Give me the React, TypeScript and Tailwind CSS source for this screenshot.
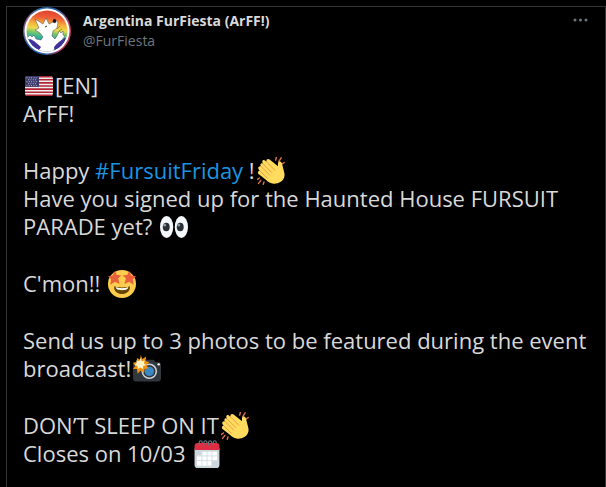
import React from 'react';

const emojiClass = 'mx-0.5 -my-1 inline-block h-7 w-7 align-[-2px]';

function Avatar() {
  return (
    <svg viewBox="0 0 48 48" className="h-12 w-12 shrink-0" role="img" aria-label="Avatar">
      <defs>
        <linearGradient id="rainbow" x1="0.1" y1="0" x2="0" y2="1">
          <stop offset="0" stopColor="#dc3a30" />
          <stop offset="0.18" stopColor="#ee5f35" />
          <stop offset="0.32" stopColor="#f7b63c" />
          <stop offset="0.42" stopColor="#ecd94c" />
          <stop offset="0.5" stopColor="#7cc868" />
          <stop offset="0.6" stopColor="#2fb3a0" />
          <stop offset="0.72" stopColor="#2b8fc0" />
          <stop offset="1" stopColor="#3a2f9c" />
        </linearGradient>
        <linearGradient id="ring" x1="0" y1="0" x2="1" y2="0.3">
          <stop offset="0" stopColor="#c8405a" />
          <stop offset="0.3" stopColor="#2f6fb4" />
          <stop offset="0.7" stopColor="#2a5fa8" />
          <stop offset="1" stopColor="#c03a5c" />
        </linearGradient>
        <clipPath id="disc">
          <circle cx="24" cy="24" r="20.500" />
        </clipPath>
      </defs>
      <circle cx="24" cy="24" r="24" fill="url(#ring)" />
      <circle cx="24" cy="24" r="22.500" fill="#fff" />
      <g clipPath="url(#disc)">
        <rect width="48" height="48" fill="url(#rainbow)" />
        {/* fox with both arms up */}
        <path
          d="M4 31l3-3 2 2 2-2 2 4 5 1 2-3-3-4-5-3 4-2-4-9 8 5 3-6 3 6 4-2 3-2 2 3-1 5-4 3-1 5 3 3 3-5 1-3 2 2 2-2 0 4 2 1-4 5-5 4-2 5 3 7H14l3-6-5-5z"
          fill="#fff"
          stroke="#4b4b3a"
          strokeWidth="0.500"
        />
        <path d="M5 33c2 5 6 8 11 10l2-3-7-6-4-2z" fill="#42309c" />
        <path d="M43 31c-2 6-6 10-11 12l-1-3 5-5 6-4z" fill="#42309c" />
        <path d="M34 22l3-3M36 24l3-2" stroke="#8a7a2c" strokeWidth="0.800" />
        <ellipse cx="31.500" cy="14" rx="1.800" ry="2" fill="#151515" />
        <path d="M22 20l2-1" stroke="#333" strokeWidth="1" />
      </g>
    </svg>
  );
}

function Flag() {
  return (
    <svg viewBox="0 0 36 36" className={emojiClass} role="img" aria-label="United States">
      <defs>
        <clipPath id="flag">
          <rect y="5" width="36" height="26" rx="4" />
        </clipPath>
      </defs>
      <g clipPath="url(#flag)">
        <rect y="5" width="36" height="26" fill="#eee" />
        <path
          d="M0 6h36M0 10h36M0 14h36M0 18h36M0 22h36M0 26h36M0 30h36"
          stroke="#b22334"
          strokeWidth="2"
        />
        <rect y="5" width="18" height="14" fill="#3c3b6e" />
        <path
          d="M2 7.500h15M4 10h12M2 12.500h15M4 15h12M2 17.500h15"
          stroke="#fff"
          strokeWidth="1"
          strokeDasharray="1 2"
        />
      </g>
    </svg>
  );
}

function Clap() {
  return (
    <svg viewBox="0 0 36 36" className={emojiClass} role="img" aria-label="Clapping hands">
      <path
        d="M24 4l1-4M28 6l3-5M31 10l4-3M3 27l-3 2M5 30l-3 4M9 32l-1 3"
        stroke="#e2704c"
        strokeWidth="1.800"
        strokeLinecap="round"
      />
      <path
        d="M5 12c-2-3 1-5 3-3l-1-2c-1-3 2-4 4-2l1 1c0-4 3-4 5-2l10 8 0-4c0-3 4-3 5 0l3 12c2 7-3 13-11 14-5 1-9-1-13-5L2 22c-2-2 0-5 2-4l-1-1c-3-3-1-5 2-5z"
        fill="#ffdc5d"
      />
      <path
        d="M5 12l11 11M8 9l11 11M12 6l11 11M4 18l9 9"
        fill="none"
        stroke="#ef9645"
        strokeWidth="1.200"
        strokeLinecap="round"
      />
    </svg>
  );
}

function Eyes() {
  return (
    <svg viewBox="0 0 36 36" className={emojiClass} role="img" aria-label="Eyes">
      <ellipse cx="8.500" cy="18" rx="8.500" ry="14" fill="#f5f8fa" />
      <ellipse cx="27.500" cy="18" rx="8.500" ry="14" fill="#f5f8fa" />
      <ellipse cx="8" cy="18" rx="4.500" ry="5.500" fill="#292f33" />
      <ellipse cx="26" cy="18" rx="4.500" ry="5.500" fill="#292f33" />
      <circle cx="6" cy="15.500" r="2" fill="#8899a6" />
      <circle cx="24" cy="15.500" r="2" fill="#8899a6" />
    </svg>
  );
}

function StarStruck() {
  return (
    <svg viewBox="0 0 36 36" className={emojiClass} role="img" aria-label="Star-struck">
      <circle cx="18" cy="18" r="18" fill="#ffcc4d" />
      <path d="M8 21c4 2 16 2 20 0 1 6-4 10-10 10S7 27 8 21z" fill="#664500" />
      <path d="M10 22c4 2 12 2 16 0 0 3-3 4-8 4s-8-1-8-4z" fill="#fff" />
      <path
        d="M9 1l2 5 6 1-4 4 2 7-6-3-6 4 1-7-4-4 6-1zM27 1l3 6 6 1-4 4 1 7-6-4-6 3 2-7-4-4 6-1z"
        fill="#e8603c"
      />
    </svg>
  );
}

function CameraFlash() {
  return (
    <svg viewBox="0 0 36 36" className={emojiClass} role="img" aria-label="Camera with flash">
      <rect x="0" y="9" width="36" height="25" rx="4" fill="#31373d" />
      <rect x="14" y="6" width="14" height="5" rx="2" fill="#31373d" />
      <circle cx="21" cy="21" r="10" fill="#ccd6dd" />
      <circle cx="21" cy="21" r="8" fill="#31373d" />
      <circle cx="21" cy="21" r="6" fill="#3b88c3" />
      <circle cx="33" cy="12" r="1.500" fill="#fff" />
      <path
        d="M10 0l2 5 5-3-1 6 5 1-4 4 3 4-5 1-1 5-4-3-4 4-1-6-5 0 3-4-3-4 5-1 0-5 4 2z"
        fill="#f4900c"
      />
      <path d="M10 4l1 4 4-1-1 4 3 2-4 1 0 4-4-2-3 2 0-4-4-1 3-3-1-3 4 1z" fill="#fff3c4" />
    </svg>
  );
}

function Calendar() {
  return (
    <svg viewBox="0 0 36 36" className={emojiClass} role="img" aria-label="Spiral calendar">
      <path d="M2 11h32v21a4 4 0 0 1-4 4H6a4 4 0 0 1-4-4z" fill="#ccd6dd" />
      <path d="M6 4h24a4 4 0 0 1 4 4v5H2V8a4 4 0 0 1 4-4z" fill="#dd2e44" />
      <path d="M11 15h20v12h-7v6H5V20h6z" fill="#fff" />
      <path
        d="M5 20.500h26M5 26.500h26M11.500 15v18M18 15v18M24.500 15v18"
        stroke="#ccd6dd"
        strokeWidth="1"
      />
      <path
        d="M8 7V3q0-2 2-2t2 3M14 7V3q0-2 2-2t2 3M20 7V3q0-2 2-2t2 3M26 7V3q0-2 2-2t2 3"
        fill="none"
        stroke="#66757f"
        strokeWidth="1.500"
      />
    </svg>
  );
}

export default function App() {
  return (
    <div className="min-h-screen bg-black pt-1.5 pl-1.5 font-['Open_Sans','Noto_Sans',sans-serif] text-[#d9d9d9]">
      <article className="min-h-[calc(100vh-6px)] border border-b-0 border-[#2f3336] px-4 pb-4">
        <header className="flex items-start gap-3">
          <Avatar />
          <div className="flex-1 pt-1 text-sm leading-5">
            <h1 className="font-bold">Argentina FurFiesta (ArFF!)</h1>
            <p className="text-[#6e767d]">@FurFiesta</p>
          </div>
          <button type="button" aria-label="More" className="mt-1 text-[#6e767d]">
            <svg viewBox="0 0 18 18" className="h-[18px] w-[18px]" fill="currentColor">
              <circle cx="4" cy="9" r="1.500" />
              <circle cx="9.500" cy="9" r="1.500" />
              <circle cx="15" cy="9" r="1.500" />
            </svg>
          </button>
        </header>

        <div className="mt-4 flex flex-col gap-[29px] text-[22px] leading-7">
          <p>
            <Flag />[EN]
            <br />
            ArFF!
          </p>
          <p>
            Happy <a href="#FursuitFriday" className="text-[#1b95e0]">#FursuitFriday</a> !<Clap />
            <br />
            Have you signed up for the Haunted House FURSUIT PARADE yet? <Eyes />
          </p>
          <p>
            C'mon!! <StarStruck />
          </p>
          <p>
            Send us up to 3 photos to be featured during the event broadcast!<CameraFlash />
          </p>
          <p>
            DON’T SLEEP ON IT<Clap />
            <br />
            Closes on 10/03 <Calendar />
          </p>
        </div>
      </article>
    </div>
  );
}
